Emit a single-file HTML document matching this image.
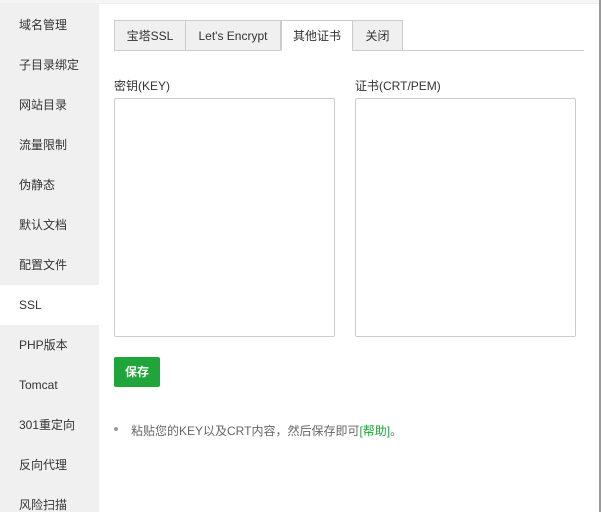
<!DOCTYPE html>
<html><head><meta charset="utf-8"><style>
*{margin:0;padding:0;box-sizing:border-box}
body{width:601px;height:512px;overflow:hidden;background:#fff;font-family:"Liberation Sans","Noto Sans CJK SC",sans-serif;font-size:12px;color:#555;position:relative}
.top{position:absolute;left:0;top:0;width:601px;height:4px;background:#f6f6f6;border-bottom:1px solid #eee}
.rb{position:absolute;right:0;top:0;width:2px;height:512px;background:#999}
.side{position:absolute;left:0;top:4px;width:99px;height:508px;background:#f0f0f0;padding-top:1px}
.side div{height:40px;line-height:40px;padding-left:19px;color:#333;font-size:12px}
.side div.on{background:#fff}
.tabs{position:absolute;left:114px;top:20px;width:470px;height:31px;border-bottom:1px solid #ccc}
.tab{position:absolute;top:0;height:31px;line-height:30px;text-align:center;background:#f0f0f0;border:1px solid #ccc;color:#333;font-size:12px}
.tab.on{background:#fff;border-bottom-color:#fff}
.lbl{position:absolute;top:77px;color:#333;font-size:12px}
.ta{position:absolute;top:98px;width:221px;height:239px;border:1px solid #ccc;border-radius:2px}
.btn{position:absolute;left:114px;top:357px;width:46px;height:30px;background:#20a53a;color:#fff;border-radius:2px;font-weight:bold;text-align:center;line-height:30px;font-size:12px}
.note{position:absolute;left:131px;top:422px;color:#666;font-size:12px}
.dot{position:absolute;left:114px;top:427px;width:4px;height:4px;border-radius:2px;background:#999}
</style></head><body>
<div class="top"></div>
<div class="side">
<div>域名管理</div><div>子目录绑定</div><div>网站目录</div><div>流量限制</div><div>伪静态</div><div>默认文档</div><div>配置文件</div><div class="on">SSL</div><div>PHP版本</div><div>Tomcat</div><div>301重定向</div><div>反向代理</div><div>风险扫描</div>
</div>
<div class="tabs">
<div class="tab" style="left:0;width:72px">宝塔SSL</div>
<div class="tab" style="left:71px;width:96px">Let's Encrypt</div>
<div class="tab on" style="left:167px;width:72px">其他证书</div>
<div class="tab" style="left:238px;width:51px">关闭</div>
</div>
<div class="lbl" style="left:114px">密钥(KEY)</div>
<div class="lbl" style="left:355px">证书(CRT/PEM)</div>
<div class="ta" style="left:114px"></div>
<div class="ta" style="left:355px"></div>
<div class="btn">保存</div>
<div class="dot"></div>
<div class="note">粘贴您的KEY以及CRT内容，然后保存即可<span style="color:#20a53a">[帮助]</span>。</div>
<div class="rb"></div>
</body></html>
